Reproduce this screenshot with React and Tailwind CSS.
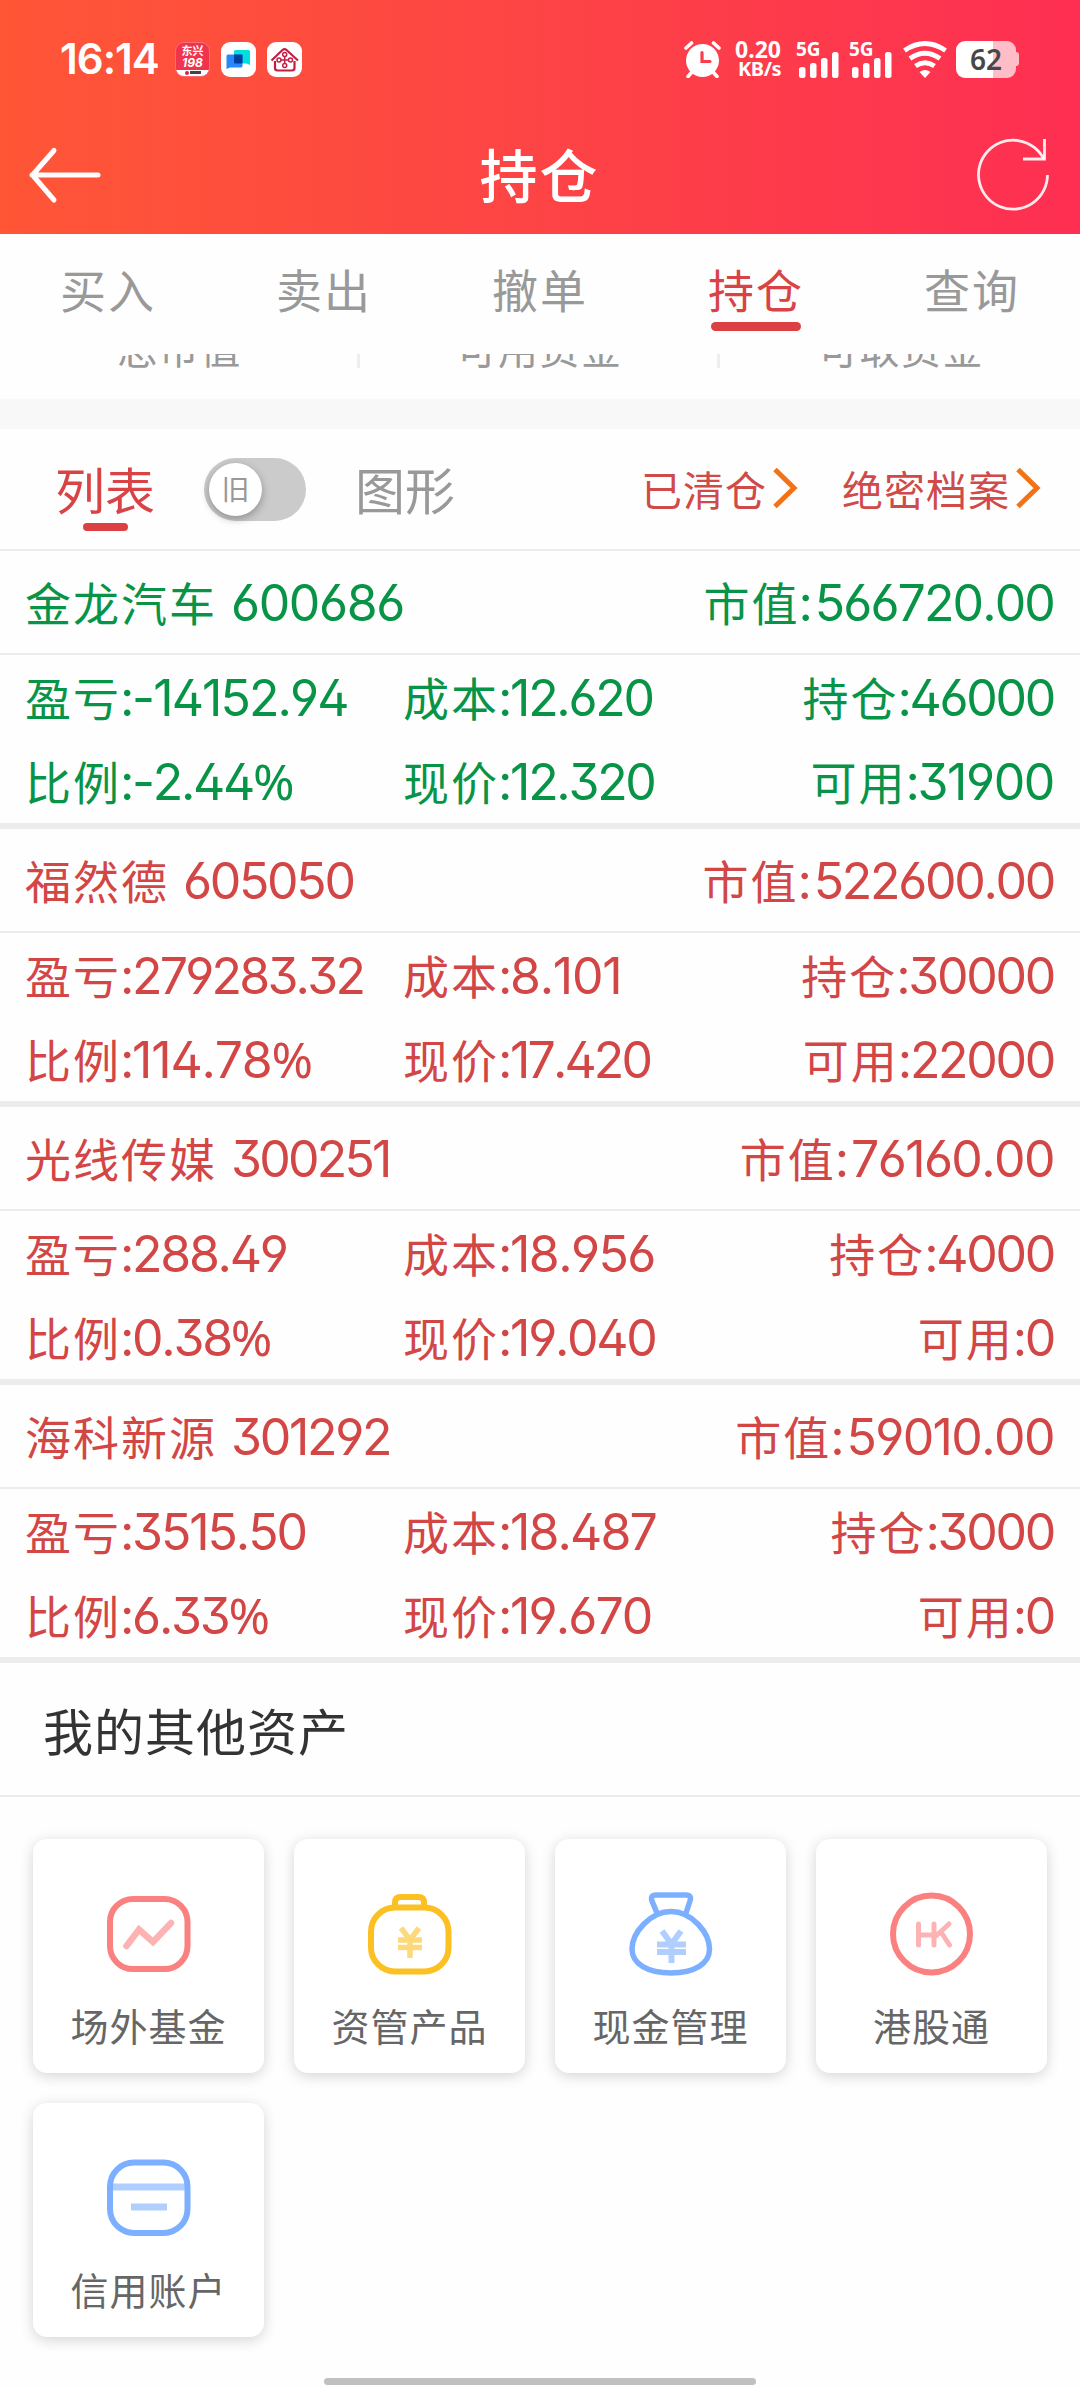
import { clsx } from "clsx";

const TABS = ["买入", "卖出", "撤单", "持仓", "查询"];

const SUMMARY = ["总市值", "可用资金", "可取资金"];

const POSITIONS = [
    {
        name: "金龙汽车",
        code: "600686",
        value: "566720.00",
        profit: "-14152.94",
        cost: "12.620",
        hold: "46000",
        ratio: "-2.44%",
        price: "12.320",
        usable: "31900",
        down: true,
    },
    {
        name: "福然德",
        code: "605050",
        value: "522600.00",
        profit: "279283.32",
        cost: "8.101",
        hold: "30000",
        ratio: "114.78%",
        price: "17.420",
        usable: "22000",
    },
    {
        name: "光线传媒",
        code: "300251",
        value: "76160.00",
        profit: "288.49",
        cost: "18.956",
        hold: "4000",
        ratio: "0.38%",
        price: "19.040",
        usable: "0",
    },
    {
        name: "海科新源",
        code: "301292",
        value: "59010.00",
        profit: "3515.50",
        cost: "18.487",
        hold: "3000",
        ratio: "6.33%",
        price: "19.670",
        usable: "0",
    },
];

const ASSETS = [
    { label: "场外基金", Icon: FundIcon },
    { label: "资管产品", Icon: ProductIcon },
    { label: "现金管理", Icon: CashIcon },
    { label: "港股通", Icon: HkIcon },
    { label: "信用账户", Icon: CreditIcon },
];

function FundIcon() {
    return (
        <svg width="84" height="88" viewBox="0 0 84 88" fill="none">
            <rect x="3" y="7" width="77.5" height="70" rx="23" stroke="#fb8080" strokeWidth="6" />
            <path d="M19.500 54L32 37.500L46 50L64 31" stroke="#fdb3b3" strokeWidth="6.500" strokeLinecap="round" />
        </svg>
    );
}

function ProductIcon() {
    return (
        <svg width="84" height="88" viewBox="0 0 84 88" fill="none">
            <rect x="3" y="15.500" width="77.500" height="64" rx="24" stroke="#fcc022" strokeWidth="6" />
            <path d="M27 15V10.500Q27 5 32.500 5H50.500Q56 5 56 10.500V15" stroke="#fcc022" strokeWidth="6" />
            <path d="M33 36L42 48L51 36M30 48H54M30 55.500H54M42 48V66" stroke="#fdd97c" strokeWidth="5.500" />
        </svg>
    );
}

function CashIcon() {
    return (
        <svg width="84" height="88" viewBox="0 0 84 88" fill="none">
            <path
                d="M42 19.500C63 19.500 80.500 41 80.500 57C80.500 72 65 81 42 81S3 72 3 57C3 41 21 19.500 42 19.500Z"
                stroke="#7cafff"
                strokeWidth="5.500"
            />
            <path d="M28 21L23 9Q21 3 27 3H57Q63 3 61 9L57 21" stroke="#7cafff" strokeWidth="5.500" />
            <path d="M33 39L42.500 52L52 39M28 52.500H57M28 60H57M42.500 52V71" stroke="#b0cfff" strokeWidth="6" />
        </svg>
    );
}

function HkIcon() {
    return (
        <svg width="84" height="88" viewBox="0 0 84 88" fill="none">
            <circle cx="41.500" cy="42" r="38.500" stroke="#fb8080" strokeWidth="6" />
            <g stroke="#fdb3b3" strokeWidth="5" strokeLinecap="round">
                <path d="M28.500 32V53M28.500 43H43" />
                <path d="M44 32V53M59 32L46 44M51 40L59.500 53" />
            </g>
        </svg>
    );
}

function CreditIcon() {
    return (
        <svg width="84" height="88" viewBox="0 0 84 88" fill="none">
            <path d="M5 31H79M24 51H60" stroke="#b0cfff" strokeWidth="7" />
            <rect x="3" y="6.500" width="77.500" height="70.500" rx="24" stroke="#7cafff" strokeWidth="6" />
        </svg>
    );
}

function Signal() {
    return (
        <svg className="overflow-visible" width="43" height="37" viewBox="0 0 43 37" fill="#fff">
            <text x="-1" y="14.500" fontSize="19" fontWeight="700" fontFamily="Noto Sans, sans-serif">
                5G
            </text>
            <rect x="2" y="26" width="6.500" height="11" rx="2.500" />
            <rect x="13" y="22" width="6.500" height="15" rx="2.500" />
            <rect x="24" y="17" width="6.500" height="20" rx="2.500" />
            <rect x="35" y="11" width="6.500" height="26" rx="2.500" />
        </svg>
    );
}

function StatusBar() {
    return (
        <div className="flex h-[118px] items-center pl-[60px] pr-[61px] text-white">
            <span className="w-[115px] font-['Inter'] text-[42px] font-semibold leading-none tracking-[-1px]">16:14</span>
            <div className="flex gap-[11px]">
                <div className="flex size-[35px] flex-col overflow-hidden rounded-[9px] border border-[#ff6a7a] bg-[#f0344c]">
                    <span className="mt-px text-center text-[11px] font-bold leading-[12px]">东兴</span>
                    <span className="text-center font-['Inter'] text-[12px] font-bold italic leading-[13px]">198</span>
                    <span className="mt-px flex h-2 items-center justify-center gap-px bg-white">
                        <i className="size-1 rounded-full bg-[#d8243c]" />
                        <i className="h-[3px] w-[11px] bg-[#444]" />
                    </span>
                </div>
                <svg width="35" height="35" viewBox="0 0 35 35">
                    <rect width="35" height="35" rx="9" fill="#fff" />
                    <path d="M14.500 8H27.500Q29 8 29 9.500V23L25.500 21.500H14.500Q13 21.500 13 20V9.500Q13 8 14.500 8Z" fill="#00dfe0" />
                    <path d="M7 12.500H20Q21.500 12.500 21.500 14V24Q21.500 25.500 20 25.500H9L5.500 27V14Q5.500 12.500 7 12.500Z" fill="#2787ff" />
                    <rect x="13" y="12.500" width="8.500" height="9" rx="1" fill="#00409c" />
                </svg>
                <svg width="35" height="35" viewBox="0 0 35 35" fill="none" stroke="#c41c42">
                    <rect width="35" height="35" rx="9" fill="#fff" stroke="none" />
                    <path d="M4.500 18.500L15.500 8Q17.500 6.300 19.500 8L31 18.500M8 19V26Q8 28.500 10.500 28.500H25Q27.500 28.500 27.500 26V19" strokeWidth="2.200" />
                    <g strokeWidth="1.500">
                        <circle cx="17.700" cy="12.500" r="2" />
                        <circle cx="12" cy="18" r="2" />
                        <circle cx="23.500" cy="18" r="2" />
                        <circle cx="17.700" cy="23.500" r="2" />
                        <path d="M17.700 14.500V21.500M14 18H21.500" />
                    </g>
                </svg>
            </div>
            <div className="ml-auto flex items-center">
                <svg className="mr-[14px]" width="37" height="37" viewBox="0 0 37 37" fill="none">
                    <circle cx="18.500" cy="19.500" r="16.500" fill="#fff" />
                    <path d="M18 11.500V20.500H26" stroke="#fc3c4a" strokeWidth="3.200" strokeLinecap="round" />
                    <path d="M2 7L7.500 2M35 7L29.500 2M4 35.500L8 31M33 35.500L29 31" stroke="#fff" strokeWidth="3.600" strokeLinecap="round" />
                </svg>
                <div className="mr-[16px] flex w-[46px] flex-col items-end font-['Noto_Sans'] font-bold">
                    <span className="text-[23px] leading-[20px]">0.20</span>
                    <span className="text-[20px] leading-[20px] tracking-[-0.5px]">KB/s</span>
                </div>
                <div className="flex gap-[10px]">
                    <Signal />
                    <Signal />
                </div>
                <svg className="ml-[10px] mr-[9px]" width="44" height="37" viewBox="0 0 44 37" fill="none" stroke="#fff" strokeWidth="4.800">
                    <path d="M1.500 9.500Q22 -4.500 42.500 9.500" />
                    <path d="M7 17.500Q22 7 37 17.500" />
                    <path d="M12.500 25Q22 18.500 31.500 25" />
                    <path d="M16.500 31Q22 27 27.500 31L22 37Z" fill="#fff" stroke="none" />
                </svg>
                <div className="flex items-center">
                    <div className="flex h-[37px] w-[60px] items-center justify-center rounded-[9px] bg-[linear-gradient(90deg,#fff_61%,#ffbdc8_61%)] font-['Noto_Sans'] text-[28px] font-semibold leading-none text-[#474747]">
                        62
                    </div>
                    <i className="h-[14px] w-[3px] rounded-r-[3px] bg-[#ffbdc8]" />
                </div>
            </div>
        </div>
    );
}

function Header() {
    return (
        <header className="h-[234px] bg-[linear-gradient(90deg,#ff5636_0%,#fd4445_50%,#fe2f52_100%)]">
            <StatusBar />
            <div className="flex h-[116px] items-center justify-between pl-[28px] pr-[29px] text-white">
                <svg width="74" height="60" viewBox="0 0 74 60" fill="none" stroke="#fff" strokeWidth="5" strokeLinecap="round" strokeLinejoin="round">
                    <path d="M70 29H4M26 4.500L4.500 29L26 54" />
                </svg>
                <h1 className="pb-[7px] text-[58px] font-medium leading-none tracking-[2px]">持仓</h1>
                <svg width="74" height="76" viewBox="0 0 74 76" fill="none" stroke="#fff" strokeWidth="2.800" strokeOpacity="0.900">
                    <path d="M70.500 37A34.500 34.500 0 1 1 67 21.500" />
                    <path d="M67.500 1V21H46" />
                </svg>
            </div>
        </header>
    );
}

function TabBar() {
    return (
        <nav className="grid h-[120px] grid-cols-5">
            {TABS.map((tab) => (
                <div
                    key={tab}
                    className={clsx(
                        "flex flex-col items-center pt-[30px] text-[46px] leading-[48px] tracking-[2px]",
                        tab === "持仓" ? "text-[#d94346]" : "text-[#999]"
                    )}
                >
                    <span>{tab}</span>
                    {tab === "持仓" && <i className="mt-[10px] h-[9px] w-[90px] rounded-full bg-[#dd4043]" />}
                </div>
            ))}
        </nav>
    );
}

function Summary() {
    return (
        <div className="h-[45px] overflow-hidden">
            <div className="-mt-[28px] grid grid-cols-3 text-[40px] leading-[42px] tracking-[1.5px] text-[#999]">
                {SUMMARY.map((item, i) => (
                    <span key={item} className={clsx("pl-[2px] text-center", i < 2 && "border-r-[3px] border-[#eee]")}>
                        {item}
                    </span>
                ))}
            </div>
        </div>
    );
}

function Chevron() {
    return (
        <svg width="26" height="42" viewBox="0 0 26 42" fill="none" stroke="#f17315" strokeWidth="5">
            <path d="M2 1.500L21 20L2 38.500" />
        </svg>
    );
}

function ListHead() {
    return (
        <div className="flex h-[122px] items-center border-b-2 border-[#ececec] pl-[55px] pr-[38px] text-[50px] leading-[60px]">
            <div className="relative pb-[3px] text-[#d94346]">
                列表
                <i className="absolute -bottom-[10px] left-[28px] h-2 w-[45px] rounded-full bg-[#dd4043]" />
            </div>
            <div className="ml-[49px] flex h-[63px] w-[102px] items-center rounded-full bg-[#cbcbcb] pl-[5px]">
                <span className="flex size-[53px] items-center justify-center rounded-full bg-white pb-[2px] text-[28px] leading-none text-[#999] shadow-[0_3px_8px_rgba(0,0,0,0.3)]">
                    旧
                </span>
            </div>
            <span className="ml-[49px] pb-[3px] text-[#999]">图形</span>
            <div className="ml-auto flex items-center text-[41px] tracking-[1px] text-[#d04a4a]">
                <span className="pb-[3px]">已清仓</span>
                <span className="ml-[6px]">
                    <Chevron />
                </span>
                <span className="ml-[43px] pb-[3px]">绝密档案</span>
                <span className="ml-[6px]">
                    <Chevron />
                </span>
            </div>
        </div>
    );
}

// figures that need looser or tighter spacing than the default
const TRACKING = {
    "600686": "tracking-[-1.4px]",
    "300251": "tracking-[-2.8px]",
    "566720.00": "tracking-[-1.9px]",
    "76160.00": "tracking-[-1.6px]",
    "59010.00": "tracking-[-1.6px]",
    "-14152.94": "tracking-[-1.9px]",
    "279283.32": "tracking-[-2.8px]",
    "114.78%": "tracking-[-1.2px]",
    "3515.50": "tracking-[-2.1px]",
    "8.101": "tracking-[-1.3px]",
    "17.420": "tracking-[-2.9px]",
    "18.956": "tracking-[-1.6px]",
    "18.487": "tracking-[-1.9px]",
    "19.670": "tracking-[-1.9px]",
    "31900": "tracking-[-1.4px]",
};

// open 6/9 digits, the percent sign comes from a narrower face
function Num({ children, className }) {
    const percent = children.endsWith("%");

    return (
        <span
            className={clsx(
                "pt-[2px] font-['Inter'] text-[50px] [font-feature-settings:'cv03','cv04','ss01'] [font-kerning:none]",
                TRACKING[children] ?? "tracking-[-2.3px]",
                className
            )}
        >
            {percent ? children.slice(0, -1) : children}
            {percent && <span className="font-['Noto_Sans'] leading-[0]">%</span>}
        </span>
    );
}

function Field({ label, value, right, wide }) {
    return (
        <div className={clsx("flex items-center", right && "justify-end pr-px")}>
            <span className="pb-[3px] text-[46px] tracking-[2px]">{label}</span>
            <Num className="-ml-px">:</Num>
            <Num className={clsx(wide && "ml-[4px]")}>{value}</Num>
        </div>
    );
}

function Position({ item }) {
    return (
        <section
            className={clsx(
                "h-[278px] border-b-[6px] border-[#ececec] leading-none",
                item.down ? "text-[#089447]" : "text-[#d34646]"
            )}
        >
            <div className="flex h-[104px] items-center justify-between border-b-2 border-[#ececec] px-[25px]">
                <div className="flex items-center">
                    <span className="pb-[3px] text-[46px] tracking-[2px]">{item.name}</span>
                    <Num className="ml-[14px]">{item.code}</Num>
                </div>
                <Field label="市值" value={item.value} right wide />
            </div>
            <div className="grid h-[168px] grid-cols-[378px_1fr_1fr] grid-rows-2 items-center px-[25px]">
                <Field label="盈亏" value={item.profit} />
                <Field label="成本" value={item.cost} />
                <Field label="持仓" value={item.hold} right />
                <Field label="比例" value={item.ratio} />
                <Field label="现价" value={item.price} />
                <Field label="可用" value={item.usable} right />
            </div>
        </section>
    );
}

function OtherAssets() {
    return (
        <section>
            <h2 className="flex h-[134px] items-center border-b-2 border-[#ececec] pb-px pl-[43px] text-[50px] leading-none tracking-[1px] text-[#333]">
                我的其他资产
            </h2>
            <div className="grid grid-cols-4 gap-[30px] pl-[33px] pr-[33px] pt-[42px]">
                {ASSETS.map(({ label, Icon }) => (
                    <div
                        key={label}
                        className="flex h-[234px] flex-col items-center rounded-[14px] bg-white pt-[53px] shadow-[0_3px_14px_rgba(0,0,0,0.17)]"
                    >
                        <Icon />
                        <span className="mt-[24px] text-[38px] leading-[42px] tracking-[1px] text-[#666]">{label}</span>
                    </div>
                ))}
            </div>
        </section>
    );
}

export default function App() {
    return (
        <div className="relative h-[2388px] w-[1080px] overflow-hidden bg-[#fefefe] font-['Noto_Sans_CJK_SC',sans-serif]">
            <Header />
            <TabBar />
            <Summary />
            <div className="h-[30px] bg-[#f8f8f8]" />
            <ListHead />
            {POSITIONS.map((item) => (
                <Position key={item.code} item={item} />
            ))}
            <OtherAssets />
            <div className="absolute bottom-[3px] left-[324px] h-[7px] w-[432px] rounded-full bg-[#c0c0c0]" />
        </div>
    );
}
